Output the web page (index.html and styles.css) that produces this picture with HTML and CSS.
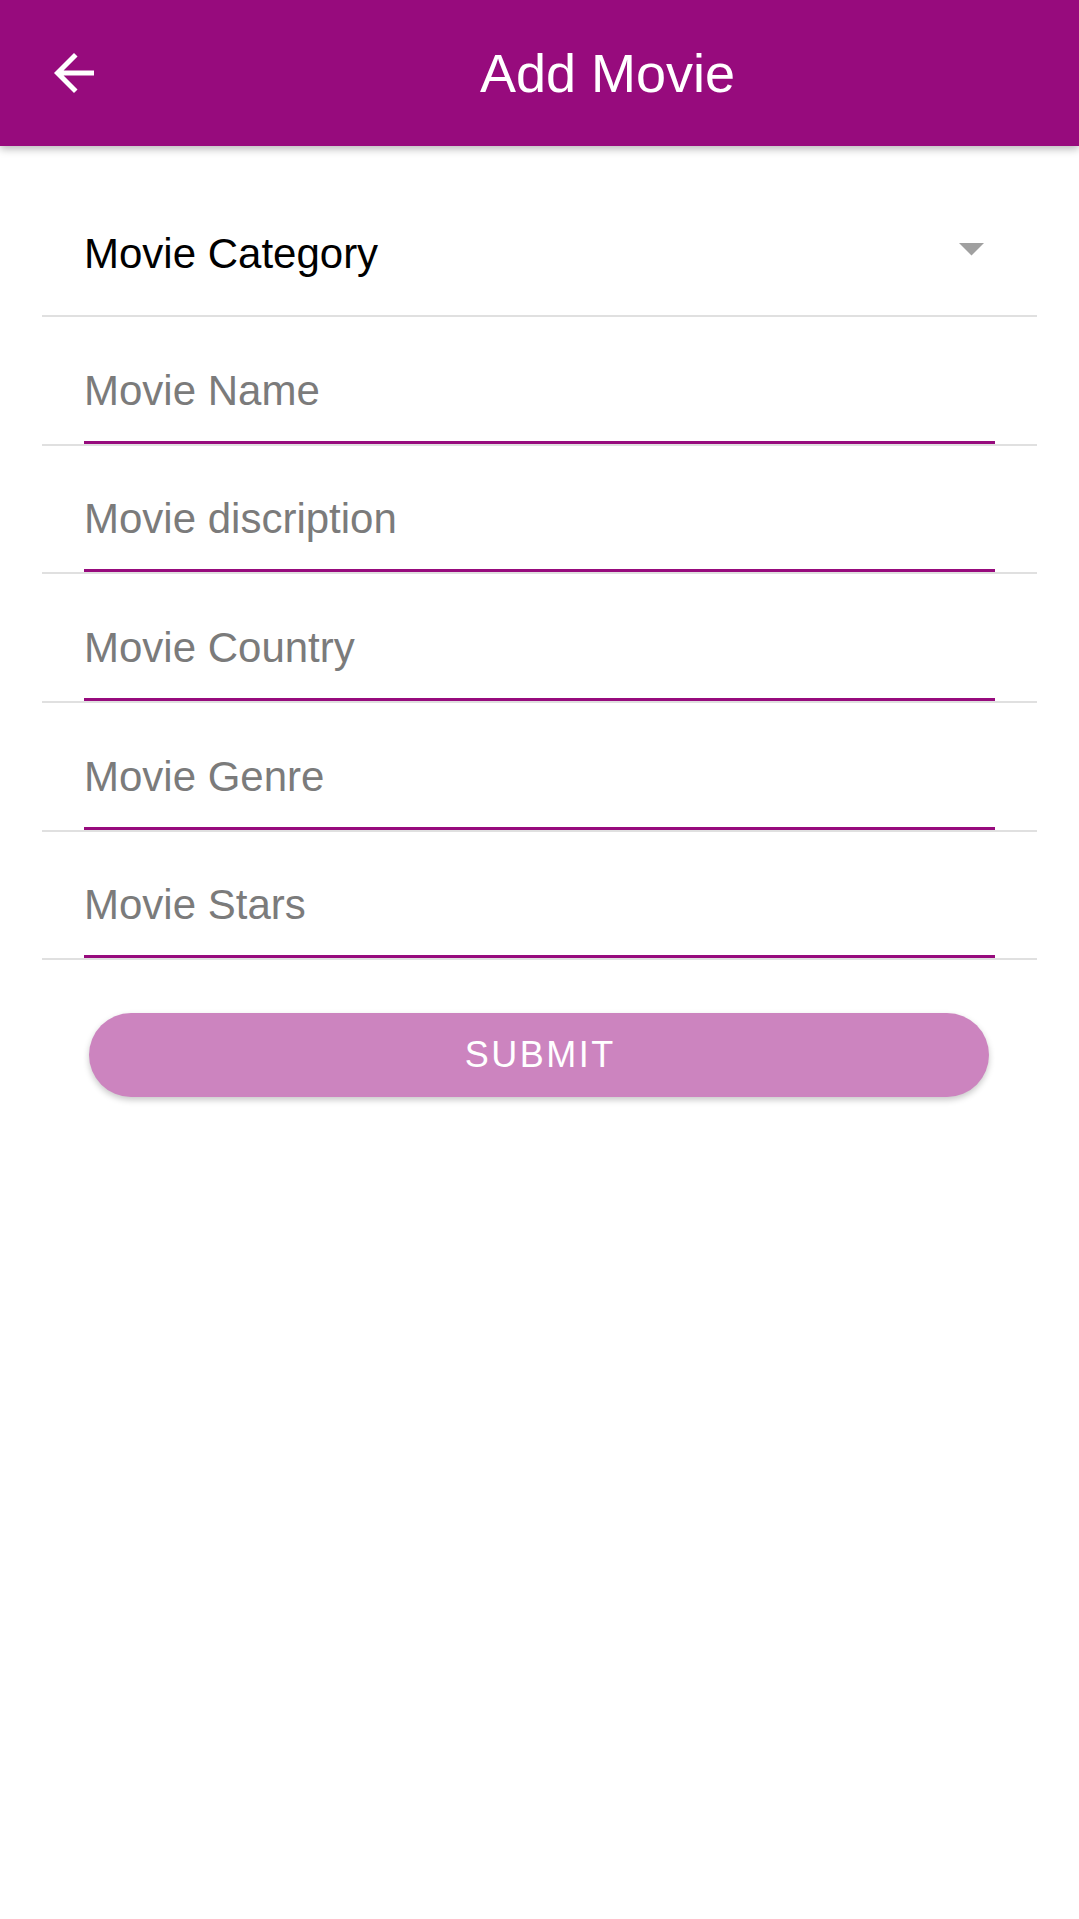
FILE: index.html
```html
<!DOCTYPE html>
<html lang="en">
<head>
<meta charset="utf-8">
<title>Add Movie</title>
<link rel="stylesheet" href="styles.css">
</head>
<body>
<header class="appbar">
  <svg class="back" viewBox="0 0 24 24" width="60" height="60" aria-label="Back">
    <path d="M20 11H7.83l5.59-5.59L12 4l-8 8 8 8 1.41-1.41L7.83 13H20v-2z" fill="#ffffff"/>
  </svg>
  <h1 class="title">Add Movie</h1>
</header>
<main class="form">
  <div class="dropdown">
    <span class="dropdown-label">Movie Category</span>
    <svg class="caret" viewBox="7 10 10 5" width="25" height="12.5" aria-hidden="true">
      <path d="M7 10l5 5 5-5z" fill="#a0a0a0"/>
    </svg>
  </div>
  <div class="divider"></div>
  <div class="row"><input class="field" type="text" placeholder="Movie Name"></div>
  <div class="divider"></div>
  <div class="row"><input class="field" type="text" placeholder="Movie discription"></div>
  <div class="divider"></div>
  <div class="row"><input class="field" type="text" placeholder="Movie Country"></div>
  <div class="divider"></div>
  <div class="row"><input class="field" type="text" placeholder="Movie Genre"></div>
  <div class="divider"></div>
  <div class="row"><input class="field" type="text" placeholder="Movie Stars"></div>
  <div class="divider"></div>
  <button class="submit" type="button">SUBMIT</button>
</main>
</body>
</html>
```

FILE: styles.css
```css
* {
  box-sizing: border-box;
}

html, body {
  margin: 0;
  padding: 0;
  background: #ffffff;
}

body {
  font-family: "Liberation Sans", Arial, sans-serif;
  width: 1079px;
  min-height: 1919px;
}

.appbar {
  position: relative;
  z-index: 1;
  height: 146px;
  background: #970b7d;
  display: flex;
  align-items: center;
  box-shadow: 0 3px 8px rgba(0, 0, 0, 0.28);
}

.back {
  display: block;
  margin-left: 44px;
  flex: none;
}

.title {
  margin: 0 0 0 376px;
  font-size: 54px;
  font-weight: 400;
  color: #ffffff;
  line-height: 60px;
}

.form {
  padding: 0 42px;
}

.dropdown {
  height: 169px;
  padding: 84px 53px 0 42px;
  display: flex;
  justify-content: space-between;
  align-items: flex-start;
}

.dropdown-label {
  font-size: 42px;
  line-height: 48px;
  color: #000000;
}

.caret {
  display: block;
  margin-top: 13px;
}

.divider {
  height: 2px;
  background: #e0e0e0;
}

.row {
  padding: 0 42px;
}

.field {
  display: block;
  width: 100%;
  height: 126.7px;
  margin: 0;
  padding: 49.5px 0 26.2px 0;
  border: none;
  border-bottom: 3px solid #970b7d;
  border-radius: 0;
  outline: none;
  background: transparent;
  font-family: "Liberation Sans", Arial, sans-serif;
  font-size: 42px;
  line-height: 48px;
  color: #000000;
}

.field::placeholder {
  color: #7b7b7b;
  opacity: 1;
}

.submit {
  display: block;
  width: 900px;
  height: 84px;
  margin: 53px 0 0 47px;
  padding: 0;
  border: none;
  border-radius: 42px;
  background: #cc84bf;
  color: #ffffff;
  font-family: "Liberation Sans", Arial, sans-serif;
  font-size: 36px;
  letter-spacing: 2.5px;
  text-indent: 2.5px;
  box-shadow: 0 3px 6px rgba(0, 0, 0, 0.22);
}
```
